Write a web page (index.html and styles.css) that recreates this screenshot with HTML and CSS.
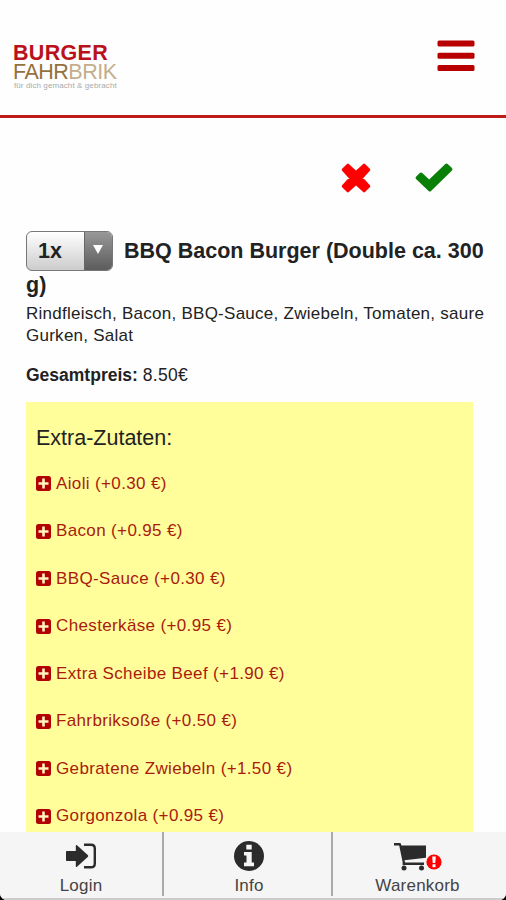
FILE: index.html
```html
<!DOCTYPE html>
<html lang="de">
<head>
  <meta charset="UTF-8" />
  <meta name="viewport" content="width=device-width, initial-scale=1" />
  <title>Burger Fahrbrik</title>
  <link rel="stylesheet" href="styles.css">
</head>
<body>

  <!-- Icon für die Extra-Zutaten -->
  <svg class="sprite" width="0" height="0">
    <symbol id="plus" viewBox="0 0 15 15">
      <path fill="#b30000" d="M2.500 0h10A2.500 2.500 0 0 1 15 2.500v10A2.500 2.500 0 0 1 12.500 15h-10A2.500 2.500 0 0 1 0 12.500v-10A2.500 2.500 0 0 1 2.500 0z" />
      <path fill="#fff3c0" d="M6.200 2.500h2.600v3.700h3.700v2.600H8.800v3.700H6.200V8.800H2.500V6.200h3.700z" />
    </symbol>
  </svg>

  <div class="app">

    <!-- Kopfzeile -->
    <header class="header">
      <div class="logo">
        <div class="logo-burger">BURGER</div>
        <div class="logo-fahrbrik">FAHR<span>BRIK</span></div>
        <div class="logo-claim">für dich gemacht &amp; gebracht</div>
      </div>
      <svg class="menu" width="38" height="32" viewBox="0 0 38 32" fill="#b80000">
        <rect x="0.500" y="0.500" width="37" height="6" rx="1.500" />
        <rect x="0.500" y="12.700" width="37" height="6" rx="1.500" />
        <rect x="0.500" y="25" width="37" height="6" rx="1.500" />
      </svg>
    </header>

    <!-- Inhalt -->
    <main class="content">
      <div class="actions">
        <svg width="30" height="30" viewBox="0 0 30 30">
          <path fill="#f00" stroke="#f00" stroke-width="3" stroke-linejoin="round" d="M6.800 2.200L15 9.700L23.200 2.200L27.800 6.800L20.300 15L27.800 23.200L23.200 27.800L15 20.300L6.800 27.800L2.200 23.200L9.700 15L2.200 6.800z" />
        </svg>
        <svg width="38" height="29" viewBox="0 0 38 29">
          <path fill="#088008" d="M1 13.700L4.800 9.900Q6 8.900 7.200 9.900L14.200 16.500L30.300 1Q31.500 0 32.700 1L37 5.100Q38 6.300 37 7.500L16 28Q14.800 29 13.600 28L1 16Q0 14.800 1 13.700z" />
        </svg>
      </div>

      <h1 class="title">
        <span class="select">
          <span class="select-value">1x</span>
          <span class="select-arrow"></span>
        </span><span>BBQ Bacon Burger (Double ca. 300<br>g)</span>
      </h1>
      <p class="description">Rindfleisch, Bacon, BBQ-Sauce, Zwiebeln, Tomaten, saure<br>Gurken, Salat</p>
      <p class="price"><strong>Gesamtpreis:</strong> <span>8.50€</span></p>

      <section class="extras">
        <h2>Extra-Zutaten:</h2>
        <ul>
          <li><svg><use href="#plus" /></svg><span>Aioli (+0.30 €)</span></li>
          <li><svg><use href="#plus" /></svg><span>Bacon (+0.95 €)</span></li>
          <li><svg><use href="#plus" /></svg><span>BBQ-Sauce (+0.30 €)</span></li>
          <li><svg><use href="#plus" /></svg><span>Chesterkäse (+0.95 €)</span></li>
          <li><svg><use href="#plus" /></svg><span>Extra Scheibe Beef (+1.90 €)</span></li>
          <li><svg><use href="#plus" /></svg><span>Fahrbriksoße (+0.50 €)</span></li>
          <li><svg><use href="#plus" /></svg><span>Gebratene Zwiebeln (+1.50 €)</span></li>
          <li><svg><use href="#plus" /></svg><span>Gorgonzola (+0.95 €)</span></li>
        </ul>
      </section>
    </main>

    <!-- Fußleiste -->
    <nav class="tabs">
      <a class="tab">
        <svg width="30" height="30" viewBox="0 -2 30 30">
          <path fill="#2b2b2b" d="M0.800 8h9V2.500q.3-.9 1.200-.3l11 10q.5.800 0 1.600l-11 10q-.9.600-1.200-.3V18h-9q-.8 0-.8-.8V8.800q0-.8.800-.8z" />
          <path fill="none" stroke="#2b2b2b" stroke-width="2.400" d="M18 1.700h7q3.800 0 3.800 3.800v15q0 3.800-3.800 3.800h-7" />
        </svg>
        <span>Login</span>
      </a>
      <a class="tab tab-info">
        <svg width="30" height="30" viewBox="0 0 30 30">
          <circle cx="15" cy="15" r="15" fill="#2b2b2b" />
          <path fill="#f5f5f5" d="M12.300 3.800h5.400v4.700h-5.400zM10 11h7.700v10.600H20v3.600H10v-3.600h2.500v-7H10z" />
        </svg>
        <span>Info</span>
      </a>
      <a class="tab tab-cart">
        <svg width="48" height="30" viewBox="0 -2 48 30">
          <path fill="#2b2b2b" d="M0 0h6.500l1 2.500H32v12.200L10.500 17.300l.6 2.200H30V22H8.600v-3L5.200 2.600H0z" />
          <circle cx="10" cy="25" r="2.500" fill="#2b2b2b" />
          <circle cx="27.500" cy="25" r="2.500" fill="#2b2b2b" />
          <circle cx="40" cy="19" r="7.600" fill="#f00" />
          <path fill="#fff" d="M38.200 13.500h3.600l-.5 6.500h-2.600zM38.500 21.300h3v2.900h-3z" />
        </svg>
        <span>Warenkorb</span>
      </a>
    </nav>

  </div>

</body>
</html>
```
FILE: styles.css
```css
* {
  margin: 0;
  padding: 0;
  box-sizing: border-box;
}
body {
  background: #000;
  color: #222;
  font-family: 'Liberation Sans', Arial, sans-serif;
}
.sprite {
  display: block;
}
.app {
  display: flex;
  flex-direction: column;
  width: 506px;
  height: 900px;
  overflow: hidden;
  background: #fefefe;
  border-radius: 0 0 7px 7px;
}

/* --- Kopfzeile --- */
.header {
  flex: none;
  display: flex;
  justify-content: space-between;
  height: 118px;
  padding: 40px 31px 0 13px;
  border-bottom: 3px solid #bd1a1a;
}
.logo {
  padding-top: 4px;
  white-space: nowrap;
}
.logo-burger {
  font-size: 21.500px;
  line-height: 19px;
  font-weight: 700;
  letter-spacing: 0.3px;
  color: #b9121b;
}
.logo-fahrbrik {
  font-size: 21.500px;
  line-height: 19px;
  letter-spacing: -0.500px;
  color: #94713c;
}
.logo-fahrbrik span {
  color: #c4ae8c;
}
.logo-claim {
  padding-left: 1px;
  font-size: 8px;
  line-height: 8px;
  letter-spacing: 0.1px;
  color: #aaa;
}

/* --- Inhalt --- */
.content {
  flex: 1;
  min-height: 0;
  overflow: hidden;
  padding: 45px 0 0 26px;
}
.actions {
  display: flex;
  align-items: flex-start;
  gap: 44px;
  height: 30px;
  margin-left: 315px;
}
.title {
  margin-top: 38px;
  font-size: 21.500px;
  line-height: 28px;
  white-space: nowrap;
}
.select {
  display: inline-flex;
  vertical-align: baseline;
  width: 87px;
  height: 40px;
  margin-right: 11px;
  border: 1px solid #777;
  border-radius: 6px;
  overflow: hidden;
  background: linear-gradient(#fff, #ccc);
}
.select-value {
  flex: 1;
  padding-left: 11px;
  line-height: 39px;
}
.select-arrow {
  width: 28px;
  padding: 13px 0 0 8px;
  border-left: 1px solid #666;
  background: linear-gradient(#989898, #5c5c5c);
}
.select-arrow::before {
  content: '';
  display: block;
  width: 0;
  border: 5px solid transparent;
  border-top: 9px solid #fff;
  border-bottom: 0;
}
.description {
  margin-top: 4px;
  font-size: 17px;
  line-height: 22px;
  letter-spacing: 0.260px;
  white-space: nowrap;
}
.price {
  margin-top: 17px;
  font-size: 17.500px;
  line-height: 22px;
}
.price span {
  letter-spacing: 0.3px;
}

/* --- Extra-Zutaten --- */
.extras {
  width: 447px;
  height: 480px;
  margin-top: 16px;
  padding: 22px 10px;
  background: #fffe9b;
}
.extras h2 {
  font-size: 21.500px;
  font-weight: 400;
  line-height: 28px;
}
.extras ul {
  margin-top: 8px;
  list-style: none;
}
.extras li {
  display: flex;
  align-items: center;
  gap: 5px;
  height: 47.500px;
  font-size: 17px;
  letter-spacing: 0.360px;
  color: #a91b0d;
}
.extras svg {
  width: 15px;
  height: 15px;
}

/* --- Fußleiste --- */
.tabs {
  flex: none;
  display: grid;
  grid-template-columns: 162px 169px 175px;
  height: 68px;
  background: #f5f5f5;
  border-bottom: 2px solid #ccc;
}
.tab {
  display: flex;
  flex-direction: column;
  align-items: center;
  justify-content: space-between;
  height: 64px;
  padding-top: 9px;
  font-size: 17px;
  line-height: 20px;
  letter-spacing: 0.2px;
  color: #444;
}
.tab + .tab {
  border-left: 2px solid #aaa;
}
.tab-info {
  padding-left: 3px;
}
.tab-cart {
  padding-right: 4px;
}
```
